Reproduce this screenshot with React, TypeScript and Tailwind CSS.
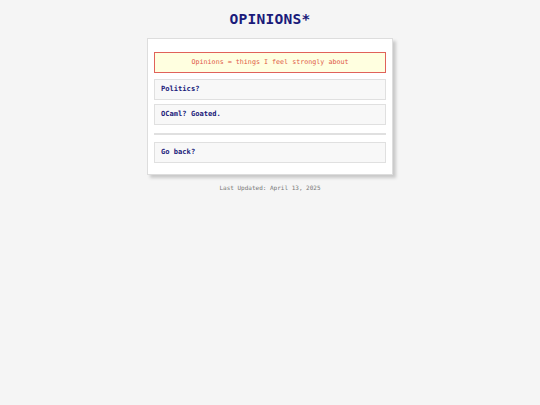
import React from "react";

const mono = { fontFamily: '"DejaVu Sans Mono", "Liberation Mono", monospace' };

function Entry({ label, className = "" }: { label: string; className?: string }) {
  return (
    <div
      className={`h-[21px] flex items-center px-[6px] bg-[#f8f8f8] border border-[#e0e0e0] text-[7.1px] font-bold text-[#1a1a7a] ${className}`}
    >
      {label}
    </div>
  );
}

export default function App() {
  return (
    <div className="min-h-[405px] w-full bg-[#f5f5f5] flex flex-col items-center" style={mono}>
      <h1 className="mt-[10px] h-[17px] leading-[17px] text-[14.6px] font-bold tracking-[0.2px] text-[#1a1a7a]">
        OPINIONS*
      </h1>
      <div className="mt-[11px] w-[246px] bg-white border border-[#dddddd] shadow-[3px_3px_3px_rgba(0,0,0,0.18)] pt-[13px] px-[6px] pb-[11px] flex flex-col">
        <div className="h-[21px] flex items-center justify-center bg-[#ffffe0] border border-[#e0625a] text-[6.7px] text-[#e05a48]">
          Opinions ≈ things I feel strongly about
        </div>
        <Entry label="Politics?" className="mt-[6px]" />
        <Entry label="OCaml? Goated." className="mt-[4px]" />
        <div className="mt-[8px] h-[2px] bg-[#e0e0e0]" />
        <Entry label="Go back?" className="mt-[7px]" />
      </div>
      <p className="mt-[9px] text-[6px] leading-[8px] text-[#777777]">Last Updated: April 13, 2025</p>
    </div>
  );
}
